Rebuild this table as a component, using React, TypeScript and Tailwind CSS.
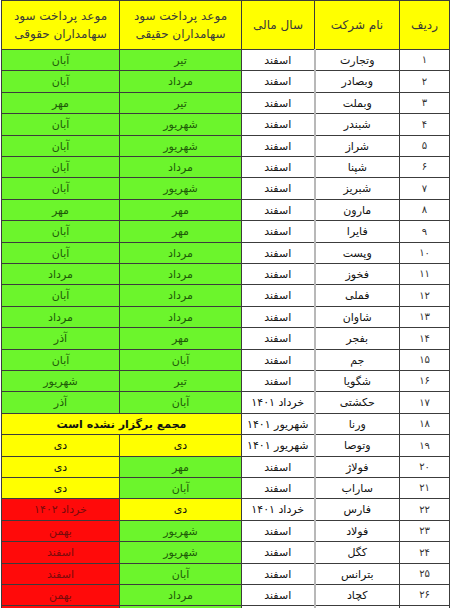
import React from "react";

type C = "g" | "y" | "r" | "w";
type Row = { n: string; name: string; year: string; a: string; ac: C; b: string; bc: C; merged?: boolean };

const rows: Row[] = [
  { n: "۱", name: "وتجارت", year: "اسفند", a: "تیر", ac: "g", b: "آبان", bc: "g" },
  { n: "۲", name: "وبصادر", year: "اسفند", a: "مرداد", ac: "g", b: "آبان", bc: "g" },
  { n: "۳", name: "وبملت", year: "اسفند", a: "تیر", ac: "g", b: "مهر", bc: "g" },
  { n: "۴", name: "شبندر", year: "اسفند", a: "شهریور", ac: "g", b: "آبان", bc: "g" },
  { n: "۵", name: "شراز", year: "اسفند", a: "شهریور", ac: "g", b: "آبان", bc: "g" },
  { n: "۶", name: "شپنا", year: "اسفند", a: "مرداد", ac: "g", b: "آبان", bc: "g" },
  { n: "۷", name: "شبریز", year: "اسفند", a: "شهریور", ac: "g", b: "آبان", bc: "g" },
  { n: "۸", name: "مارون", year: "اسفند", a: "مهر", ac: "g", b: "مهر", bc: "g" },
  { n: "۹", name: "فایرا", year: "اسفند", a: "مهر", ac: "g", b: "آبان", bc: "g" },
  { n: "۱۰", name: "وپست", year: "اسفند", a: "مرداد", ac: "g", b: "آبان", bc: "g" },
  { n: "۱۱", name: "فخوز", year: "اسفند", a: "مرداد", ac: "g", b: "مرداد", bc: "g" },
  { n: "۱۲", name: "فملی", year: "اسفند", a: "مرداد", ac: "g", b: "آبان", bc: "g" },
  { n: "۱۳", name: "شاوان", year: "اسفند", a: "مرداد", ac: "g", b: "مرداد", bc: "g" },
  { n: "۱۴", name: "بفجر", year: "اسفند", a: "مهر", ac: "g", b: "آذر", bc: "g" },
  { n: "۱۵", name: "جم", year: "اسفند", a: "آبان", ac: "g", b: "آبان", bc: "g" },
  { n: "۱۶", name: "شگویا", year: "اسفند", a: "تیر", ac: "g", b: "شهریور", bc: "g" },
  { n: "۱۷", name: "حکشتی", year: "خرداد ۱۴۰۱", a: "آبان", ac: "g", b: "آذر", bc: "g" },
  { n: "۱۸", name: "ورنا", year: "شهریور ۱۴۰۱", a: "مجمع برگزار نشده است", ac: "y", b: "", bc: "y", merged: true },
  { n: "۱۹", name: "وتوصا", year: "شهریور ۱۴۰۱", a: "دی", ac: "y", b: "دی", bc: "y" },
  { n: "۲۰", name: "فولاژ", year: "اسفند", a: "مهر", ac: "g", b: "دی", bc: "y" },
  { n: "۲۱", name: "ساراب", year: "اسفند", a: "آبان", ac: "g", b: "دی", bc: "y" },
  { n: "۲۲", name: "فارس", year: "خرداد ۱۴۰۱", a: "دی", ac: "y", b: "خرداد ۱۴۰۲", bc: "r" },
  { n: "۲۳", name: "فولاد", year: "اسفند", a: "شهریور", ac: "g", b: "بهمن", bc: "r" },
  { n: "۲۴", name: "کگل", year: "اسفند", a: "شهریور", ac: "g", b: "اسفند", bc: "r" },
  { n: "۲۵", name: "بترانس", year: "اسفند", a: "آبان", ac: "g", b: "اسفند", bc: "r" },
  { n: "۲۶", name: "کچاد", year: "اسفند", a: "مرداد", ac: "g", b: "بهمن", bc: "r" },
  { n: "", name: "", year: "", a: "", ac: "g", b: "", bc: "r" },
];

const cls = (c: C) =>
  c === "g"
    ? "bg-[#6cf52c] text-[#1e5a08]"
    : c === "y"
    ? "bg-[#ffff00] text-[#111]"
    : c === "r"
    ? "bg-[#ff0a0a] text-[#7a0a0a]"
    : "bg-white text-[#111]";

const td = "border border-[#3c3c3c] text-center align-middle p-0 leading-none whitespace-nowrap";

export default function App() {
  return (
    <div className="w-[450px] h-[608px] overflow-hidden bg-white" style={{ fontFamily: '"DejaVu Sans", sans-serif' }}>
      <table dir="rtl" className="ml-px border-collapse table-fixed w-[448px] text-[11px]">
        <colgroup>
          <col className="w-[50px]" />
          <col className="w-[85px]" />
          <col className="w-[73px]" />
          <col className="w-[122px]" />
          <col className="w-[118px]" />
        </colgroup>
        <thead>
          <tr className="h-[49px] bg-[#ffff00] text-[#3a3a3a] text-[12px]">
            <th className={`${td} font-normal`}>ردیف</th>
            <th className={`${td} font-normal`}>نام شرکت</th>
            <th className={`${td} font-normal`}>سال مالی</th>
            <th className={`${td} font-normal`}>
              <div className="flex flex-col items-center gap-[6px]">
                <span>موعد پرداخت سود</span>
                <span>سهامداران حقیقی</span>
              </div>
            </th>
            <th className={`${td} font-normal`}>
              <div className="flex flex-col items-center gap-[6px]">
                <span>موعد پرداخت سود</span>
                <span>سهامداران حقوقی</span>
              </div>
            </th>
          </tr>
        </thead>
        <tbody>
          {rows.map((r, i) => (
            <tr key={i} className={i % 5 === 1 || i % 5 === 3 ? "h-[22px]" : "h-[21px]"}>
              <td className={`${td} bg-white text-[#333] text-[10px]`}>{r.n}</td>
              <td className={`${td} bg-white text-[#111] border-l-2 border-l-[#b8b8b8]`}>{r.name}</td>
              <td className={`${td} bg-white text-[#111]`}>{r.year}</td>
              {r.merged ? (
                <td colSpan={2} className={`${td} ${cls("y")} font-bold`}>
                  {r.a}
                </td>
              ) : (
                <>
                  <td className={`${td} ${cls(r.ac)}`}>{r.a}</td>
                  <td className={`${td} ${cls(r.bc)}`}>{r.b}</td>
                </>
              )}
            </tr>
          ))}
        </tbody>
      </table>
    </div>
  );
}
